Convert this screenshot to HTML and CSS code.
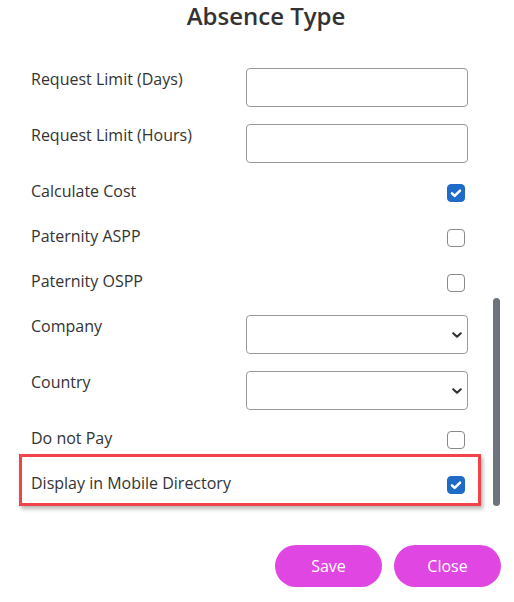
FILE: index.html
```html
<!DOCTYPE html>
<html>
<head>
<meta charset="utf-8">
<link rel="stylesheet" href="styles.css">
</head>
<body>
<div class="dialog">
  <h1 class="title">Absence Type</h1>
  <div class="form">
    <div class="row row-input">
      <label class="label">Request Limit (Days)</label>
      <div class="ctrl"><input class="field" type="text"></div>
    </div>
    <div class="row row-input">
      <label class="label">Request Limit (Hours)</label>
      <div class="ctrl"><input class="field" type="text"></div>
    </div>
    <div class="row row-check">
      <label class="label">Calculate Cost</label>
      <div class="ctrl"><span class="cb checked"><svg viewBox="0 0 20 20" width="18" height="18"><path d="M5.5 10.3l3 3 6-6" fill="none" stroke="#fff" stroke-width="2.8" stroke-linecap="round" stroke-linejoin="round"/></svg></span></div>
    </div>
    <div class="row row-check">
      <label class="label">Paternity ASPP</label>
      <div class="ctrl"><span class="cb"></span></div>
    </div>
    <div class="row row-check">
      <label class="label">Paternity OSPP</label>
      <div class="ctrl"><span class="cb"></span></div>
    </div>
    <div class="row row-input">
      <label class="label">Company</label>
      <div class="ctrl"><div class="select"><svg class="chev" viewBox="0 0 10 6" width="10" height="6"><path d="M1.2 1.2L5 4.8 8.8 1.2" fill="none" stroke="#2b3035" stroke-width="2" stroke-linecap="round" stroke-linejoin="round"/></svg></div></div>
    </div>
    <div class="row row-input">
      <label class="label">Country</label>
      <div class="ctrl"><div class="select"><svg class="chev" viewBox="0 0 10 6" width="10" height="6"><path d="M1.2 1.2L5 4.8 8.8 1.2" fill="none" stroke="#2b3035" stroke-width="2" stroke-linecap="round" stroke-linejoin="round"/></svg></div></div>
    </div>
    <div class="row row-check">
      <label class="label">Do not Pay</label>
      <div class="ctrl"><span class="cb"></span></div>
    </div>
    <div class="row row-check highlight">
      <label class="label">Display in Mobile Directory</label>
      <div class="ctrl"><span class="cb checked"><svg viewBox="0 0 20 20" width="18" height="18"><path d="M5.5 10.3l3 3 6-6" fill="none" stroke="#fff" stroke-width="2.8" stroke-linecap="round" stroke-linejoin="round"/></svg></span></div>
    </div>
  </div>
  <div class="actions">
    <button class="btn">Save</button>
    <button class="btn">Close</button>
  </div>
  <div class="scroll-thumb"></div>
</div>
</body>
</html>
```
FILE: styles.css
```css
html, body {
  margin: 0;
  padding: 0;
  background: #fff;
}
body {
  font-family: "Open Sans", "Noto Sans", sans-serif;
  color: #333;
}
.dialog {
  position: relative;
  width: 514px;
  height: 602px;
  overflow: hidden;
}
.title {
  margin: 0;
  padding-left: 18px;
  text-align: center;
  font-size: 24px;
  line-height: 32px;
  font-weight: 600;
  color: #333;
}
.form {
  margin-top: 35px;
  padding-left: 31px;
}
.row {
  display: flex;
  align-items: flex-start;
  width: 437px;
  margin-bottom: 16px;
}
.row-input { height: 40px; }
.row-check { height: 29px; }
.label {
  width: 215px;
  font-size: 16px;
  line-height: 24px;
  color: #333;
}
.ctrl {
  width: 222px;
  display: flex;
}
.field, .select {
  box-sizing: border-box;
  width: 222px;
  height: 39px;
  margin-top: 1px;
  border: 1px solid #9a9a9a;
  border-radius: 4px;
  background: #fff;
  padding: 0;
}
.select {
  position: relative;
}
.chev {
  position: absolute;
  right: 5px;
  top: 16px;
}
.cb {
  box-sizing: border-box;
  width: 18px;
  height: 18px;
  margin-top: 5px;
  margin-left: 201px;
  border: 1px solid #8a8a8a;
  border-radius: 4px;
  background: #fff;
  display: flex;
}
.cb.checked {
  background: #1f6bc8;
  border-color: #1f6bc8;
}
.cb.checked svg {
  margin: -1px;
}
.highlight {
  position: relative;
}
.highlight::before {
  content: "";
  position: absolute;
  left: -12px;
  top: -17px;
  right: -13px;
  bottom: -6px;
  border: 3px solid #f0434a;
  box-shadow: 2px 3px 4px rgba(0, 0, 0, 0.28);
  pointer-events: none;
}
.actions {
  display: flex;
  justify-content: flex-end;
  gap: 12px;
  padding-right: 13px;
  margin-top: 45px;
}
.btn {
  width: 107px;
  height: 42px;
  border: none;
  border-radius: 21px;
  background: #e046e2;
  color: #fff;
  font-family: "Open Sans", "Noto Sans", sans-serif;
  font-size: 16px;
  cursor: pointer;
}
.scroll-thumb {
  position: absolute;
  left: 493px;
  top: 298px;
  width: 7px;
  height: 208px;
  border-radius: 4px;
  background: #6c737a;
}
```
